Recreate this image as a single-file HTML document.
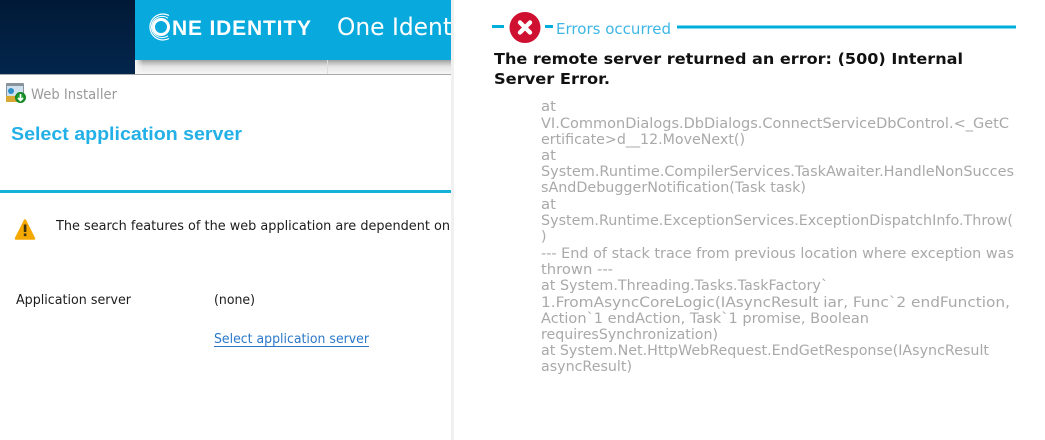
<!DOCTYPE html>
<html>
<head>
<meta charset="utf-8">
<style>
html,body{margin:0;padding:0;background:#fff;width:1045px;height:440px;overflow:hidden}
svg{display:block}
text{font-family:"DejaVu Sans","Liberation Sans",sans-serif}
.s{font-size:14px;fill:#a9a9a9}
.l{font-size:13px;fill:#1c1c1c}
</style>
</head>
<body>
<svg width="1045" height="440" viewBox="0 0 1045 440" xmlns="http://www.w3.org/2000/svg">
<defs>
<linearGradient id="d" x1="0" y1="0" x2="0" y2="1"><stop offset="0" stop-color="#011936"/><stop offset="1" stop-color="#03264d"/></linearGradient>
<linearGradient id="sh" x1="0" y1="0" x2="0" y2="1"><stop offset="0" stop-color="#a0a0a0"/><stop offset=".45" stop-color="#e4e4e4"/><stop offset="1" stop-color="#f7f7f7"/></linearGradient>
<linearGradient id="fd" x1="0" y1="0" x2="1" y2="0"><stop offset="0" stop-color="#f7f7f7"/><stop offset="1" stop-color="#f7f7f7" stop-opacity="0"/></linearGradient>
<radialGradient id="g"><stop offset="0" stop-color="#35b43c"/><stop offset="1" stop-color="#0f7f22"/></radialGradient>
</defs>

<!-- left panel header -->
<rect x="0" y="0" width="135" height="75" fill="url(#d)"/>
<rect x="135" y="0" width="316" height="60" fill="#08a9dc"/>
<rect x="135" y="60" width="316" height="14" fill="url(#sh)"/>
<rect x="135" y="60" width="8" height="14" fill="url(#fd)"/>
<rect x="327" y="60" width="1" height="14" fill="#dcdcdc"/>
<rect x="0" y="74" width="451" height="1" fill="#a9a9a9"/>

<!-- logo -->
<g fill="none" stroke="#fff">
<circle cx="161" cy="27" r="7.5" stroke-width="3"/>
<path d="M169 15.500A13 13 0 1 0 169 38.500" stroke-width="1.200"/>
<path d="M168 18.200A10.600 10.600 0 1 0 168 35.800" stroke-width="1"/>
</g>
<text x="172" y="35" font-size="21" font-weight="700" fill="#fff" textLength="139" lengthAdjust="spacing" style="font-family:'Liberation Sans',sans-serif">NE IDENTITY</text>
<text x="337" y="35" font-size="24" fill="#fff" textLength="115" lengthAdjust="spacingAndGlyphs">One Ident</text>
<rect x="451" y="0" width="3" height="440" fill="#f0f0f0"/>

<!-- web installer -->
<rect x="6" y="83" width="18" height="18" rx="1" fill="#8a929c"/>
<rect x="7" y="86" width="16" height="10" fill="#cfe0ee"/>
<circle cx="11" cy="91" r="3" fill="#2f8fc9"/>
<rect x="6" y="96" width="12" height="6" fill="#d9a935"/>
<circle cx="20.500" cy="97.500" r="5.500" fill="url(#g)"/>
<path d="M20.500 94v6M18 98l2.500 2.500L23 98" fill="none" stroke="#fff" stroke-width="1.600"/>
<text x="31" y="99" font-size="14" fill="#9a9a9a" textLength="86" lengthAdjust="spacingAndGlyphs">Web Installer</text>
<text x="11" y="140" font-size="18" font-weight="700" fill="#23b0e6" textLength="231" lengthAdjust="spacingAndGlyphs" style="font-family:'Liberation Sans',sans-serif">Select application server</text>

<rect x="0" y="190" width="451" height="3" fill="#14b1d8"/>

<!-- warning -->
<path d="M25 220.500L34 238.500H16Z" fill="#f5a800" stroke="#f5a800" stroke-width="2.500" stroke-linejoin="round"/>
<rect x="23.800" y="224.500" width="2.600" height="7.500" fill="#3d3312"/>
<rect x="23.800" y="233.500" width="2.600" height="2.600" fill="#3d3312"/>
<text class="l" x="56" y="230" textLength="394" lengthAdjust="spacingAndGlyphs">The search features of the web application are dependent on</text>
<text class="l" x="16" y="304" textLength="115" lengthAdjust="spacingAndGlyphs">Application server</text>
<text class="l" x="214" y="304" textLength="41" lengthAdjust="spacingAndGlyphs">(none)</text>
<text class="l" x="214" y="343" textLength="155" lengthAdjust="spacingAndGlyphs" style="fill:#2b78c9">Select application server</text>
<rect x="214" y="346" width="155" height="1" fill="#2b78c9"/>

<!-- error header -->
<rect x="492" y="25" width="12" height="3" fill="#00aedb"/>
<circle cx="525" cy="27.500" r="15.500" fill="#cf1031"/>
<path d="M520 22.500l10 10M530 22.500l-10 10" stroke="#fff" stroke-width="4.400" stroke-linecap="round"/>
<rect x="545" y="25" width="8" height="3" fill="#00aedb"/>
<text x="556" y="34" font-size="15" fill="#3db6e6" textLength="115" lengthAdjust="spacingAndGlyphs">Errors occurred</text>
<rect x="677" y="25.500" width="339" height="3" fill="#00aedb"/>

<text x="494" y="64" font-size="15" font-weight="700" fill="#111" textLength="469" lengthAdjust="spacingAndGlyphs">The remote server returned an error: (500) Internal</text>
<text x="494" y="84" font-size="15" font-weight="700" fill="#111" textLength="116" lengthAdjust="spacingAndGlyphs">Server Error.</text>

<!-- stack trace -->
<text class="s" x="541" y="111" textLength="15" lengthAdjust="spacingAndGlyphs">at</text>
<text class="s" x="541" y="128" textLength="468" lengthAdjust="spacingAndGlyphs">VI.CommonDialogs.DbDialogs.ConnectServiceDbControl.&lt;_GetC</text>
<text class="s" x="541" y="144" textLength="204" lengthAdjust="spacingAndGlyphs">ertificate&gt;d__12.MoveNext()</text>
<text class="s" x="541" y="160" textLength="15" lengthAdjust="spacingAndGlyphs">at</text>
<text class="s" x="541" y="176" textLength="473" lengthAdjust="spacingAndGlyphs">System.Runtime.CompilerServices.TaskAwaiter.HandleNonSucces</text>
<text class="s" x="541" y="192" textLength="265" lengthAdjust="spacingAndGlyphs">sAndDebuggerNotification(Task task)</text>
<text class="s" x="541" y="209" textLength="15" lengthAdjust="spacingAndGlyphs">at</text>
<text class="s" x="541" y="225" textLength="472" lengthAdjust="spacingAndGlyphs">System.Runtime.ExceptionServices.ExceptionDispatchInfo.Throw(</text>
<text class="s" x="541" y="241">)</text>
<text class="s" x="541" y="258" textLength="473" lengthAdjust="spacingAndGlyphs">--- End of stack trace from previous location where exception was</text>
<text class="s" x="541" y="274" textLength="72" lengthAdjust="spacingAndGlyphs">thrown ---</text>
<text class="s" x="541" y="290" textLength="287" lengthAdjust="spacingAndGlyphs">at System.Threading.Tasks.TaskFactory`</text>
<text class="s" x="541" y="307" textLength="469" lengthAdjust="spacingAndGlyphs">1.FromAsyncCoreLogic(IAsyncResult iar, Func`2 endFunction,</text>
<text class="s" x="541" y="323" textLength="328" lengthAdjust="spacingAndGlyphs">Action`1 endAction, Task`1 promise, Boolean</text>
<text class="s" x="541" y="339" textLength="177" lengthAdjust="spacingAndGlyphs">requiresSynchronization)</text>
<text class="s" x="541" y="355" textLength="448" lengthAdjust="spacingAndGlyphs">at System.Net.HttpWebRequest.EndGetResponse(IAsyncResult</text>
<text class="s" x="541" y="371" textLength="91" lengthAdjust="spacingAndGlyphs">asyncResult)</text>
</svg>
</body>
</html>
